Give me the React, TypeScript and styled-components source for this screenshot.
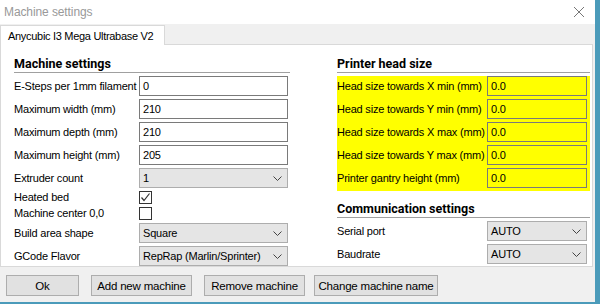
import React from "react";
import styled, { createGlobalStyle } from "styled-components";

const GlobalStyle = createGlobalStyle`
  html, body {
    margin: 0;
    padding: 0;
  }
  body {
    width: 600px;
    height: 304px;
    overflow: hidden;
    background: #4b9bba;
    font-family: "Liberation Sans", Arial, sans-serif;
    font-size: 11px;
    letter-spacing: -0.2px;
    color: #000;
  }
`;

const Window = styled.div`
  width: 595px;
  height: 302px;
  background: #f0f0f0;
  display: flex;
  flex-direction: column;
`;

const TitleBar = styled.div`
  height: 24px;
  flex: none;
  background: #fff;
  display: flex;
  align-items: center;
  justify-content: space-between;
  padding: 0 11px 0 4px;
  color: #999;
  font-size: 12px;
  letter-spacing: -0.1px;
`;

const TabStrip = styled.div`
  height: 20px;
  flex: none;
  display: flex;
  align-items: flex-end;
`;

const Tab = styled.div`
  position: relative;
  z-index: 1;
  height: 20px;
  width: 165px;
  margin-bottom: -1px;
  box-sizing: border-box;
  padding: 0 7px;
  display: flex;
  align-items: center;
  background: #fff;
  border: 1px solid #d9d9d9;
  border-bottom: none;
  font-size: 11px;
  letter-spacing: -0.3px;
  white-space: nowrap;
`;

const Panel = styled.div`
  width: 593px;
  height: 223px;
  box-sizing: border-box;
  flex: none;
  background: #fff;
  border: 1px solid #d9d9d9;
  padding: 1px 0 0 13px;
  display: grid;
  grid-template-columns: 276px 253px;
  column-gap: 47px;
  align-content: start;
`;

const Column = styled.div`
  display: flex;
  flex-direction: column;
`;

const Heading = styled.div`
  padding-top: 10px;
  line-height: 16px;
  font-family: Roboto, "Liberation Sans", sans-serif;
  font-size: 12.5px;
  font-weight: bold;
  letter-spacing: 0;
  border-bottom: 1px solid #a0a0a0;
  margin-bottom: 3px;
`;

const Form = styled.div<{ $label: number; $field: number; $bg?: string }>`
  display: grid;
  grid-template-columns: ${(p) => p.$label}px ${(p) => p.$field}px;
  row-gap: 3px;
  align-items: center;
  background: ${(p) => p.$bg ?? "transparent"};
  padding-bottom: ${(p) => (p.$bg ? "3px" : "0")};
`;

const Label = styled.div`
  white-space: nowrap;
  line-height: 13px;
`;

const TextInput = styled.div<{ $bg?: string }>`
  height: 20px;
  box-sizing: border-box;
  border: 1px solid #7a7a7a;
  background: ${(p) => p.$bg ?? "#fff"};
  padding: 0 3px;
  display: flex;
  align-items: center;
`;

const Select = styled.div`
  height: 20px;
  box-sizing: border-box;
  border: 1px solid #adadad;
  background: #e5e5e5;
  padding: 0 5px 0 3px;
  display: flex;
  align-items: center;
  justify-content: space-between;
`;

const Check = styled.div`
  width: 13px;
  height: 13px;
  box-sizing: border-box;
  border: 1px solid #333;
  background: #fff;
  display: flex;
  align-items: center;
  justify-content: center;
`;

const ButtonBar = styled.div`
  display: flex;
  gap: 12px;
  padding: 8px 0 0 6px;
`;

const Button = styled.div<{ $w: number; $ml?: number }>`
  width: ${(p) => p.$w}px;
  height: 21px;
  box-sizing: border-box;
  margin-left: ${(p) => p.$ml ?? 0}px;
  border: 1px solid #adadad;
  background: #e1e1e1;
  display: flex;
  align-items: center;
  justify-content: center;
  font-size: 11.5px;
  letter-spacing: -0.2px;
  white-space: nowrap;
`;

const Chevron = () => (
  <svg width="9" height="5" viewBox="0 0 9 5">
    <path d="M0.5 0.5 L4.5 4.5 L8.5 0.5" fill="none" stroke="#444" strokeWidth="1" />
  </svg>
);

const CloseIcon = () => (
  <svg width="10" height="10" viewBox="0 0 10 10">
    <path d="M0 0 L10 10 M10 0 L0 10" stroke="#777" strokeWidth="1" />
  </svg>
);

const CheckMark = () => (
  <svg width="11" height="11" viewBox="0 0 11 11">
    <path d="M1.5 5.5 L4 8.5 L9.5 1.5" fill="none" stroke="#333" strokeWidth="1.2" />
  </svg>
);

const machineFields = [
  ["E-Steps per 1mm filament", "0"],
  ["Maximum width (mm)", "210"],
  ["Maximum depth (mm)", "210"],
  ["Maximum height (mm)", "205"],
];

const headFields = [
  "Head size towards X min (mm)",
  "Head size towards Y min (mm)",
  "Head size towards X max (mm)",
  "Head size towards Y max (mm)",
  "Printer gantry height (mm)",
];

function App() {
  return (
    <>
      <GlobalStyle />
      <Window>
        <TitleBar>
          <span>Machine settings</span>
          <CloseIcon />
        </TitleBar>
        <TabStrip>
          <Tab>Anycubic I3 Mega Ultrabase V2</Tab>
        </TabStrip>
        <Panel>
          <Column>
            <Heading>Machine settings</Heading>
            <Form $label={125} $field={149}>
              {machineFields.map(([label, value]) => (
                <React.Fragment key={label}>
                  <Label>{label}</Label>
                  <TextInput>{value}</TextInput>
                </React.Fragment>
              ))}
              <Label>Extruder count</Label>
              <Select>
                1
                <Chevron />
              </Select>
              <Label>Heated bed</Label>
              <Check>
                <CheckMark />
              </Check>
              <Label>Machine center 0,0</Label>
              <Check />
              <Label>Build area shape</Label>
              <Select>
                Square
                <Chevron />
              </Select>
              <Label>GCode Flavor</Label>
              <Select>
                RepRap (Marlin/Sprinter)
                <Chevron />
              </Select>
            </Form>
          </Column>
          <Column>
            <Heading>Printer head size</Heading>
            <Form $label={150} $field={100} $bg="#ffff00">
              {headFields.map((label) => (
                <React.Fragment key={label}>
                  <Label>{label}</Label>
                  <TextInput $bg="#ffff00">0.0</TextInput>
                </React.Fragment>
              ))}
            </Form>
            <Heading>Communication settings</Heading>
            <Form $label={150} $field={100}>
              <Label>Serial port</Label>
              <Select>
                AUTO
                <Chevron />
              </Select>
              <Label>Baudrate</Label>
              <Select>
                AUTO
                <Chevron />
              </Select>
            </Form>
          </Column>
        </Panel>
        <ButtonBar>
          <Button $w={73}>Ok</Button>
          <Button $w={101}>Add new machine</Button>
          <Button $w={101}>Remove machine</Button>
          <Button $w={124} $ml={-3}>
            Change machine name
          </Button>
        </ButtonBar>
      </Window>
    </>
  );
}

export default App;
